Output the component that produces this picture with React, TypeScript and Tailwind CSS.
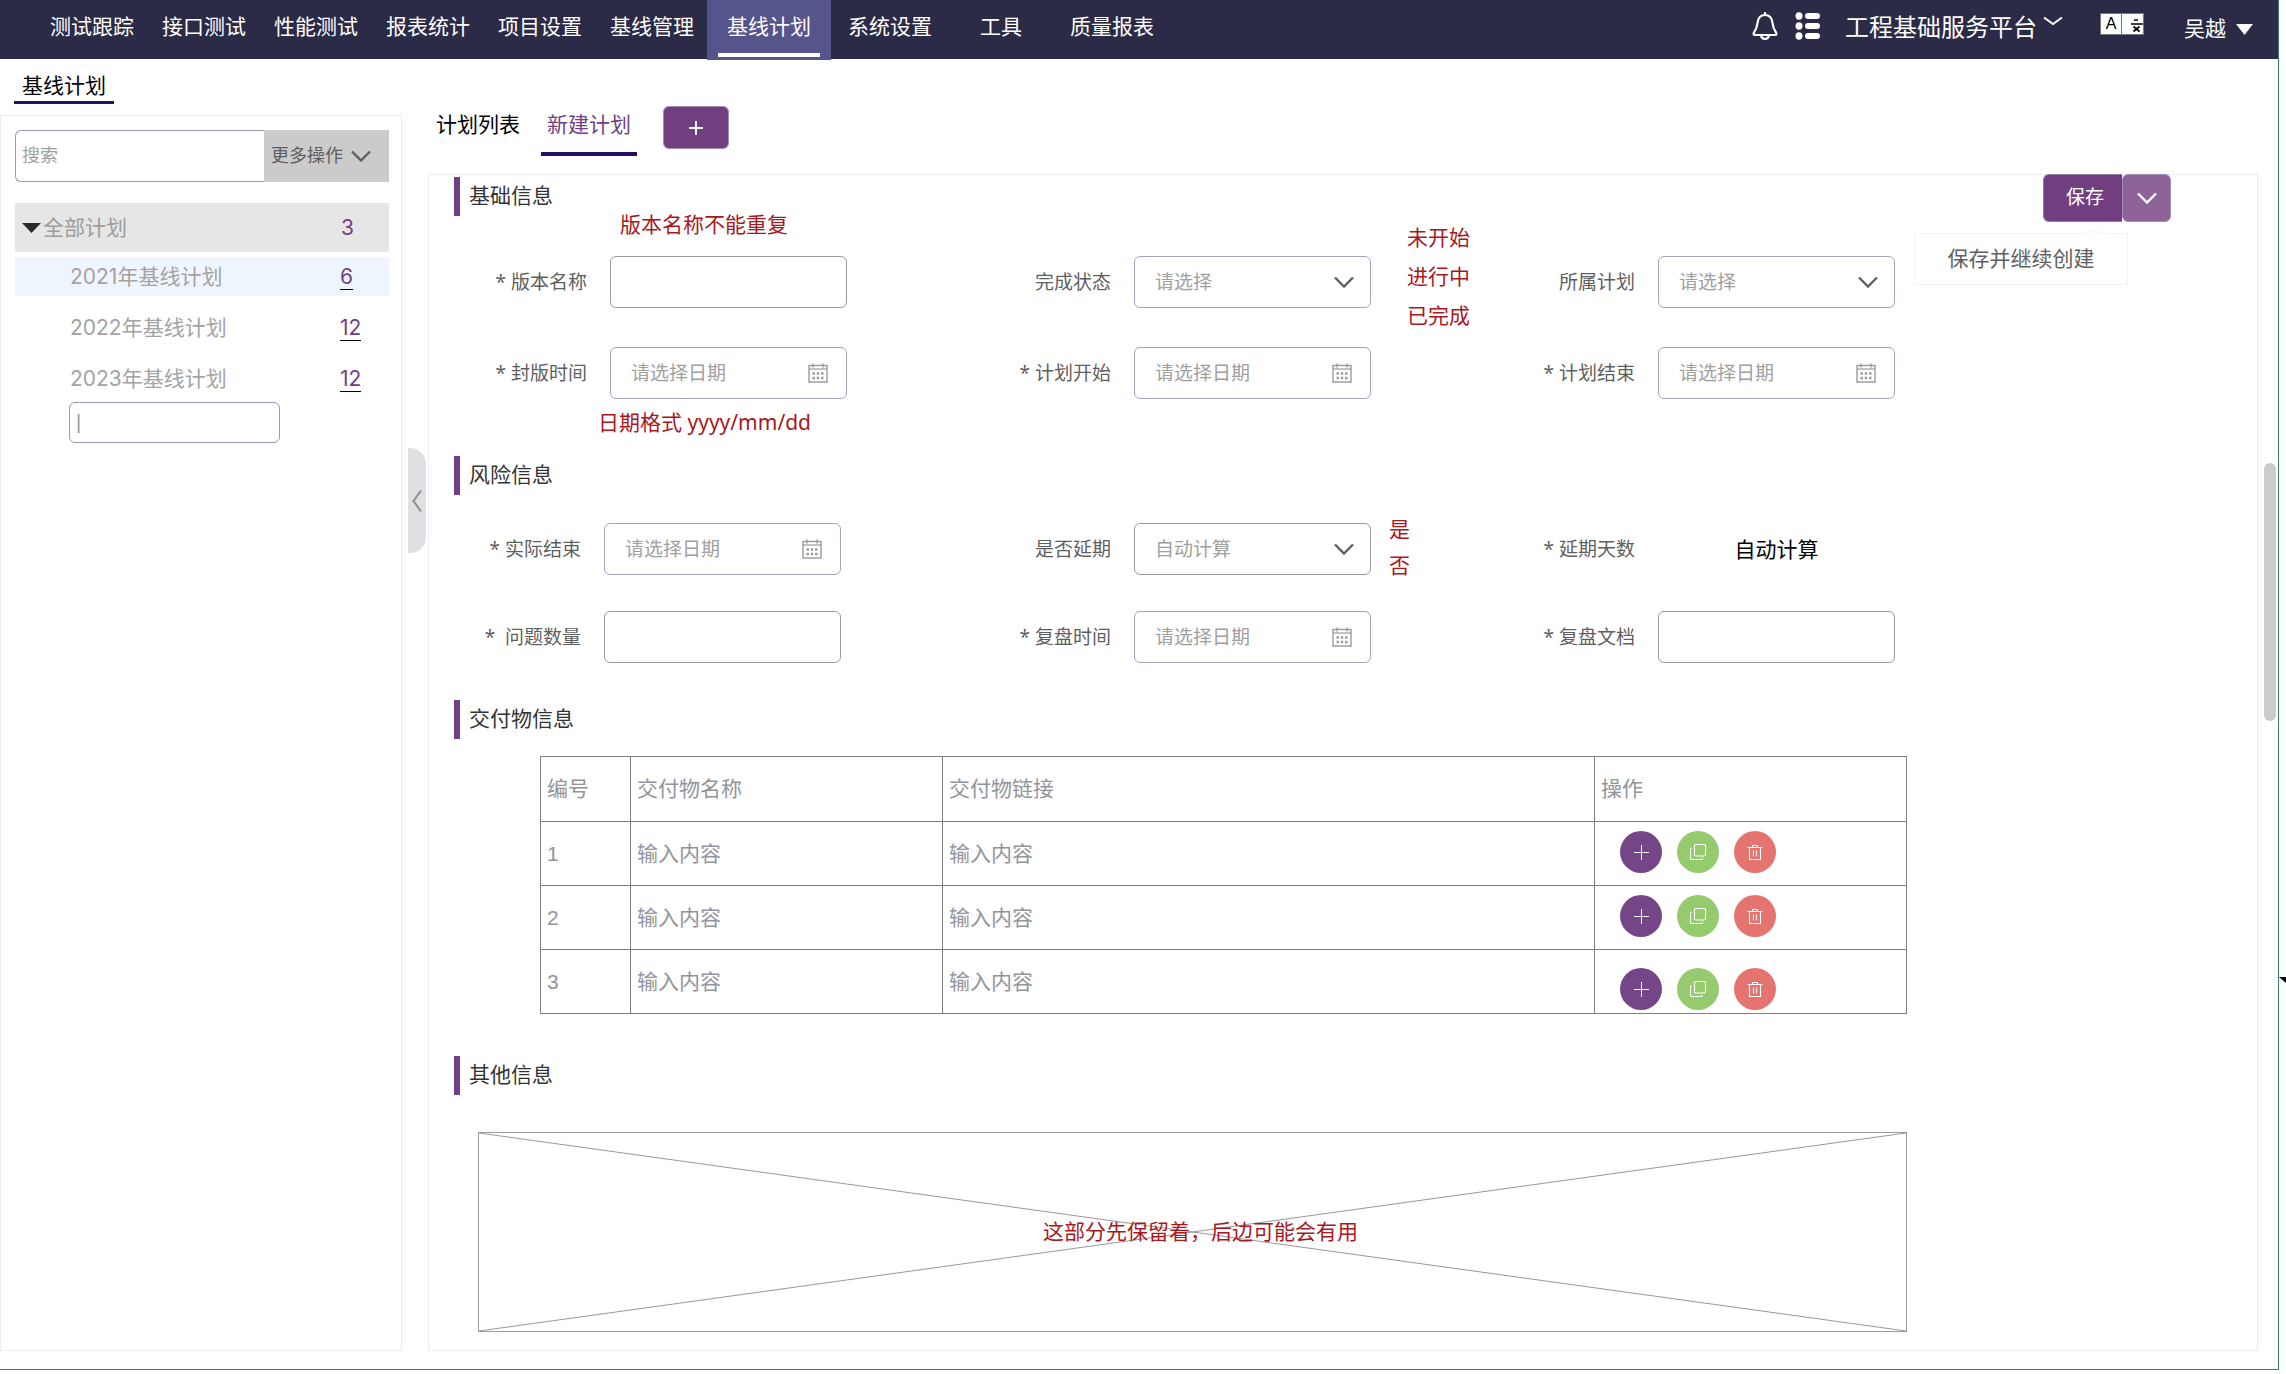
import React, { useState } from 'react'
import clsx from 'clsx'

type FieldType = 'text' | 'date' | 'select' | 'static'

type FieldProps = {
    id: string
    label: string
    type: FieldType
    placeholder?: string
    labelWidth?: string
    plain?: boolean
    children?: React.ReactNode
}

const navItems = ['测试跟踪', '接口测试', '性能测试', '报表统计', '项目设置', '基线管理']

const plans = [
    { name: '2021年基线计划', count: 6 },
    { name: '2022年基线计划', count: 12 },
    { name: '2023年基线计划', count: 12 },
]

const Chevron = ({ className }: { className?: string }) => (
    <svg viewBox="0 0 20 12" fill="none" stroke="currentColor" strokeWidth="2.4" className={clsx('w-5 h-3', className)}>
        <path d="M1 1.5 10 10.5 19 1.5" />
    </svg>
)

const BellIcon = () => (
    <svg viewBox="0 0 26 28" fill="none" stroke="currentColor" strokeWidth="2.2" strokeLinejoin="round" className="w-[26px] h-7">
        <path d="M13 1v2" strokeLinecap="round" />
        <path d="M13 3C8.500 3 6 6.500 5.500 11 5 15.500 4.500 17 2 20.500 1.200 22 1.500 23 3 23h20c1.500 0 1.800-1 1-2.500-2.500-3.500-3-5-3.500-9.500C20 6.500 17.500 3 13 3Z" />
        <path d="M9 23.500c.5 2 2 3.500 4 3.500s3.500-1.500 4-3.500" />
    </svg>
)

const ListIcon = () => (
    <svg viewBox="0 0 26 28" fill="currentColor" className="w-[26px] h-7">
        <ellipse cx="4" cy="4" rx="3.500" ry="3.700" />
        <ellipse cx="4" cy="14" rx="3.500" ry="3.700" />
        <ellipse cx="4" cy="24" rx="3.500" ry="3.700" />
        <rect x="10" y="1" width="15" height="6" rx="3" />
        <rect x="10" y="11" width="15" height="6" rx="3" />
        <rect x="10" y="21" width="15" height="6" rx="3" />
    </svg>
)

const CalendarIcon = ({ className }: { className?: string }) => (
    <svg viewBox="0 0 20 20" fill="none" stroke="currentColor" className={clsx('w-5 h-5', className)}>
        <rect x="1" y="2.500" width="18" height="16.500" strokeWidth="1.400" />
        <path d="M1 6h18" strokeWidth="1.200" />
        <path d="M5 .5v4M15 .5v4" strokeWidth="1.400" />
        <path d="M4.500 10.500h11M4.500 15h11" strokeWidth="2.400" strokeDasharray="2.400 1.900" />
    </svg>
)

const PlusIcon = () => (
    <svg viewBox="0 0 16 16" fill="none" stroke="currentColor" strokeWidth="1" className="w-4 h-4">
        <path d="M8.500 1v15M1 8.500h15" />
    </svg>
)

const CopyIcon = () => (
    <svg viewBox="0 0 18 18" fill="none" stroke="currentColor" strokeWidth="1.100" className="w-[18px] h-[18px]">
        <rect x="5.500" y="1.500" width="11" height="11.500" rx="1.500" />
        <path d="M3 5.500H2.500c-.6 0-1 .4-1 1V15c0 .9.600 1.500 1.500 1.500h9c.8 0 1.500-.6 1.500-1.500" />
    </svg>
)

const TrashIcon = () => (
    <svg viewBox="0 0 18 18" fill="none" stroke="currentColor" strokeWidth="1.100" className="w-[18px] h-[18px]">
        <path d="M1.500 4.500h15M6.500 4.500v-2h5v2M3.500 4.500v12h11v-12M7.500 7.500v6M10.500 7.500v6" />
    </svg>
)

const LanguageIcon = () => (
    <span className="flex h-[22px] text-black border border-[#777] bg-white">
        <span className="w-[21px] text-center text-base leading-5 border-r border-[#777]">A</span>
        <svg viewBox="0 0 21 20" fill="none" stroke="currentColor" className="w-[21px] h-5">
            <path d="M12 6h4" strokeWidth="1.500" />
            <path d="M9 10h12" strokeWidth="1.500" />
            <path d="M11.500 12.500l6 5M17.500 12.500l-6 5" strokeWidth="1.800" />
        </svg>
    </span>
)

const Header = () => (
    <header className="h-[59px] flex items-start justify-between bg-[#2c2b47] text-white text-[21px] leading-[54px]">
        <nav className="flex pl-[50px]">
            <div className="flex gap-7">
                {navItems.map((item) => (
                    <a key={item} href="#">
                        {item}
                    </a>
                ))}
            </div>
            <a href="#" className="ml-[13px] h-[60px] px-[11px] bg-[#56558b]">
                <span className="block h-[57px] px-[9px] border-b-4 border-white">基线计划</span>
            </a>
            <a href="#" className="ml-[17px]">
                系统设置
            </a>
            <a href="#" className="ml-12">
                工具
            </a>
            <a href="#" className="ml-12">
                质量报表
            </a>
        </nav>
        <div className="flex pr-[25px]">
            <button type="button" aria-label="通知" className="self-start mt-3">
                <BellIcon />
            </button>
            <button type="button" aria-label="菜单" className="self-start mt-3 ml-[17px]">
                <ListIcon />
            </button>
            <button type="button" className="flex items-start ml-6 text-2xl leading-[56px]">
                工程基础服务平台
                <svg viewBox="0 0 20 10" fill="none" stroke="currentColor" strokeWidth="2" className="w-5 h-2.5 ml-1.5 mt-4">
                    <path d="M1 1.500 10 8 19 1.500" />
                </svg>
            </button>
            <button type="button" aria-label="切换语言" className="self-start mt-[13px] ml-[37px]">
                <LanguageIcon />
            </button>
            <button type="button" className="flex items-center ml-10 leading-[57px]">
                吴越
                <svg viewBox="0 0 17 11" fill="currentColor" className="w-[17px] h-[11px] ml-2.5 mt-0.5">
                    <path d="M0 0h17L8.500 11Z" />
                </svg>
            </button>
        </div>
    </header>
)

const Sidebar = () => (
    <aside className="w-[402px] shrink-0 flex flex-col">
        <a href="#" className="self-start ml-3.5 px-2 pt-3 text-[21px] leading-[30px] text-black border-b-[3px] border-[#250f62]">
            基线计划
        </a>
        <div className="flex-1 mt-[11px] pt-3.5 pl-3.5 pr-3 border border-[#ececf2]">
            <div className="flex h-[52px] text-lg">
                <input
                    type="search"
                    aria-label="搜索"
                    placeholder="搜索"
                    className="flex-1 min-w-0 pl-1.5 border border-r-0 border-[#9a99b8] rounded-l-md outline-none placeholder:text-[#a0a0a0]"
                />
                <button type="button" className="w-[125px] pl-[7px] flex items-center gap-2 bg-[#cbcbcb] text-[#5f5f5f]">
                    更多操作
                    <Chevron />
                </button>
            </div>
            <button
                type="button"
                className="mt-[21px] w-full h-[49px] pl-[7px] pr-[35px] flex items-center bg-[#e6e6e6] font-['Inter','Noto_Sans_CJK_SC',sans-serif] text-[21px] text-[#9c9c9c]"
            >
                <svg viewBox="0 0 19 10" className="w-[19px] h-2.5 mr-0.5 fill-[#2b2b2b]">
                    <path d="M0 0h19L9.500 10Z" />
                </svg>
                全部计划
                <span className="ml-auto text-[#703f85]">3</span>
            </button>
            <ul className="mt-[5px] flex flex-col gap-3 font-['Inter','Noto_Sans_CJK_SC',sans-serif] text-[21px] text-[#a3a3a3]">
                {plans.map((plan, index) => (
                    <li
                        key={plan.name}
                        className={clsx('h-[39px] pl-[55px] flex items-center justify-between', index === 0 && 'bg-[#eff5fd]')}
                    >
                        <span>{plan.name}</span>
                        <span className="w-[49px]">
                            <a href="#" className="border-b border-black text-[#703f85]">
                                {plan.count}
                            </a>
                        </span>
                    </li>
                ))}
            </ul>
            <input
                type="text"
                aria-label="计划名称"
                defaultValue="|"
                className="block mt-1 ml-[54px] w-[211px] h-[41px] pl-1.5 text-xl text-[#999] border border-[#9a99b8] rounded-md outline-none"
            />
        </div>
    </aside>
)

const SectionTitle = ({ children, className }: { children: React.ReactNode; className?: string }) => (
    <h2 className={clsx('h-[39px] pl-[9px] text-[21px] leading-[38px] text-[#333] border-l-[6px] border-[#703f85]', className)}>
        {children}
    </h2>
)

const Field = ({ id, label, type, placeholder, labelWidth = 'w-[133px]', plain, children }: FieldProps) => {
    const box = clsx(
        'w-full h-full pl-5 pr-12 bg-white border rounded-md outline-none placeholder:text-[#a0a0a0]',
        plain ? 'border-[#9b9b9b]' : 'border-[#a5a4c0]',
    )

    return (
        <div className="flex items-center gap-[23px] text-[19px] font-['Noto_Sans','Noto_Sans_CJK_SC',sans-serif]">
            <label htmlFor={id} className={clsx('text-right whitespace-pre text-[#5f5f5f]', labelWidth)}>
                {label}
            </label>
            <div className="relative w-[237px] h-[52px]">
                {type === 'text' && <input id={id} type="text" className={box} />}
                {type === 'date' && (
                    <>
                        <input id={id} type="text" placeholder={placeholder} className={box} />
                        <CalendarIcon className="absolute right-[19px] top-4 text-[#999] pointer-events-none" />
                    </>
                )}
                {type === 'select' && (
                    <>
                        <select id={id} className={clsx(box, 'appearance-none text-[#a0a0a0]')}>
                            <option>{placeholder}</option>
                        </select>
                        <Chevron className="absolute right-[17px] top-5 text-[#5f5f5f] pointer-events-none" />
                    </>
                )}
                {type === 'static' && (
                    <output id={id} className="block text-center text-[21px] leading-[52px] text-black">
                        {placeholder}
                    </output>
                )}
                {children}
            </div>
        </div>
    )
}

const SaveActions = () => (
    <div className="relative -mt-[3px] ml-[17px] mr-[86px] w-32 h-12 shrink-0 flex self-start text-[19px] text-white">
        <button type="button" className="flex-1 pl-1 bg-[#713e80] border border-r-0 border-[#8f7ba8] rounded-l-md">
            保存
        </button>
        <button
            type="button"
            aria-label="更多保存方式"
            className="w-[49px] flex items-center justify-center bg-[#8d639a] border border-[#a08db5] rounded-md"
        >
            <Chevron />
        </button>
        <div className="absolute right-[43px] top-[59px] w-[214px] border border-[#f3f3f3] bg-white">
            <svg viewBox="0 0 24 5" fill="white" stroke="#f0f0f0" className="absolute right-[21px] -top-[4px] w-6 h-[5px]">
                <path d="M0 4.500 12 .5 24 4.500" />
            </svg>
            <button type="button" className="w-full h-[50px] text-[21px] text-[#5f5f5f]">
                保存并继续创建
            </button>
        </div>
    </div>
)

const Deliverables = () => {
    const [rows] = useState([1, 2, 3])

    return (
        <table className="table-fixed w-full border-collapse text-[21px] text-left text-[#92949c]">
            <colgroup>
                <col className="w-[90px]" />
                <col className="w-[312px]" />
                <col />
                <col className="w-[312px]" />
            </colgroup>
            <thead>
                <tr className="h-[65px]">
                    {['编号', '交付物名称', '交付物链接', '操作'].map((title) => (
                        <th key={title} className="px-1.5 font-normal border border-[#808080]">
                            {title}
                        </th>
                    ))}
                </tr>
            </thead>
            <tbody>
                {rows.map((row) => (
                    <tr key={row} className="group h-[64px]">
                        <td className="px-1.5 border border-[#808080]">{row}</td>
                        {['名称', '链接'].map((name) => (
                            <td key={name} className="px-1.5 border border-[#808080]">
                                <input
                                    type="text"
                                    aria-label={`交付物${name}${row}`}
                                    placeholder="输入内容"
                                    className="w-full outline-none placeholder:text-[#92949c]"
                                />
                            </td>
                        ))}
                        <td className="pl-[25px] pb-[3px] align-middle group-last:align-bottom border border-[#808080]">
                            <div className="flex gap-[15px] text-white">
                                <button
                                    type="button"
                                    aria-label="添加"
                                    className="w-[42px] h-[42px] flex items-center justify-center rounded-full bg-[#754687]"
                                >
                                    <PlusIcon />
                                </button>
                                <button
                                    type="button"
                                    aria-label="复制"
                                    className="w-[42px] h-[42px] flex items-center justify-center rounded-full bg-[#95ca6f]"
                                >
                                    <CopyIcon />
                                </button>
                                <button
                                    type="button"
                                    aria-label="删除"
                                    className="w-[42px] h-[42px] flex items-center justify-center rounded-full bg-[#e57370]"
                                >
                                    <TrashIcon />
                                </button>
                            </div>
                        </td>
                    </tr>
                ))}
            </tbody>
        </table>
    )
}

const PlanForm = () => (
    <form className="flex-1 min-w-0" onSubmit={(e) => e.preventDefault()}>
        <SectionTitle>基础信息</SectionTitle>
        <p className="ml-[166px] mb-[22px] text-[21px] leading-[18px] text-[#a8181d]">版本名称不能重复</p>
        <div className="grid grid-cols-3 gap-y-[39px]">
            <Field id="name" label="* 版本名称" type="text" plain />
            <Field id="status" label="完成状态" type="select" placeholder="请选择">
                <ul className="absolute left-full -top-[38px] ml-9 text-[21px] leading-[39px] whitespace-nowrap text-[#a8181d]">
                    <li>未开始</li>
                    <li>进行中</li>
                    <li>已完成</li>
                </ul>
            </Field>
            <Field id="plan" label="所属计划" type="select" placeholder="请选择" />
            <Field id="freeze" label="* 封版时间" type="date" placeholder="请选择日期" />
            <Field id="start" label="* 计划开始" type="date" placeholder="请选择日期" />
            <Field id="end" label="* 计划结束" type="date" placeholder="请选择日期" />
        </div>
        <p className="ml-36 mt-2 mb-[19px] font-['Noto_Sans','Noto_Sans_CJK_SC',sans-serif] text-[21px] leading-[30px] text-[#a8181d]">
            日期格式 yyyy/mm/dd
        </p>

        <SectionTitle>风险信息</SectionTitle>
        <div className="mt-7 grid grid-cols-3 gap-y-9">
            <Field id="actual" label="* 实际结束" type="date" placeholder="请选择日期" labelWidth="w-[127px]" />
            <Field id="delayed" label="是否延期" type="select" placeholder="自动计算" plain>
                <ul className="absolute left-full -top-3 ml-[18px] text-[21px] leading-[36px] text-[#a8181d]">
                    <li>是</li>
                    <li>否</li>
                </ul>
            </Field>
            <Field id="days" label="* 延期天数" type="static" placeholder="自动计算" />
            <Field id="issues" label="*  问题数量" type="text" labelWidth="w-[127px]" plain />
            <Field id="review" label="* 复盘时间" type="date" placeholder="请选择日期" />
            <Field id="doc" label="* 复盘文档" type="text" plain />
        </div>

        <SectionTitle className="mt-[37px]">交付物信息</SectionTitle>
        <div className="mt-[17px] ml-[86px] mr-[119px]">
            <Deliverables />
        </div>

        <SectionTitle className="mt-[42px]">其他信息</SectionTitle>
        <div className="relative mt-[37px] ml-6 mr-[119px] h-[200px] flex items-center justify-center border border-[#9b9b9b]">
            <svg viewBox="0 0 100 100" preserveAspectRatio="none" className="absolute inset-0 w-full h-full" stroke="#999">
                <path d="M0 0 100 100M0 100 100 0" vectorEffect="non-scaling-stroke" />
            </svg>
            <p className="relative pl-4 text-[21px] text-[#a8181d]">这部分先保留着，后边可能会有用</p>
        </div>
    </form>
)

const App = () => (
    <div className="relative min-h-screen flex flex-col pr-[7px] pb-1 bg-white font-['Liberation_Sans','Noto_Sans_CJK_SC',sans-serif]">
        <div className="flex-1 flex flex-col border-r border-b border-[#3a7f74]">
            <Header />
            <div className="flex-1 flex pb-[18px]">
                <Sidebar />
                <button
                    type="button"
                    aria-label="收起侧栏"
                    className="self-start mt-[389px] ml-1.5 mr-0.5 w-[18px] h-[105px] flex items-center justify-center bg-[#dfe0e4] text-[#8f8f8f] rounded-r-[16px]"
                >
                    <svg viewBox="0 0 10 22" fill="none" stroke="currentColor" strokeWidth="2" className="w-2.5 h-[22px]">
                        <path d="M9 .5 1.500 11 9 21.500" />
                    </svg>
                </button>
                <main className="flex-1 min-w-0 flex flex-col">
                    <div className="h-[115px] pt-[47px] flex items-start text-[21px] leading-[38px]">
                        <button type="button" className="px-2 text-black">
                            计划列表
                        </button>
                        <button type="button" className="ml-[13px] px-1.5 h-[50px] pb-2 text-[#703f85] border-b-4 border-[#250f62]">
                            新建计划
                        </button>
                        <button
                            type="button"
                            aria-label="新增标签"
                            className="ml-[26px] w-[66px] h-[43px] flex items-center justify-center bg-[#713e80] border border-[#a08db5] rounded-md text-white"
                        >
                            <svg viewBox="0 0 14 14" fill="none" stroke="currentColor" strokeWidth="2" className="w-3.5 h-3.5">
                                <path d="M7 0v14M0 7h14" />
                            </svg>
                        </button>
                    </div>
                    <div className="flex-1 flex pt-0.5 pl-[25px] border border-[#ececf2]">
                        <PlanForm />
                        <SaveActions />
                    </div>
                </main>
                <div className="mt-[404px] ml-1.5 mr-0.5 w-3 h-[258px] shrink-0 rounded-full bg-[#ccc]" />
            </div>
        </div>
        <svg viewBox="0 0 7 6" className="absolute right-0 top-[977px] w-[7px] h-1.5 fill-black">
            <path d="M0 0h7v6Z" />
        </svg>
    </div>
)

export default App
